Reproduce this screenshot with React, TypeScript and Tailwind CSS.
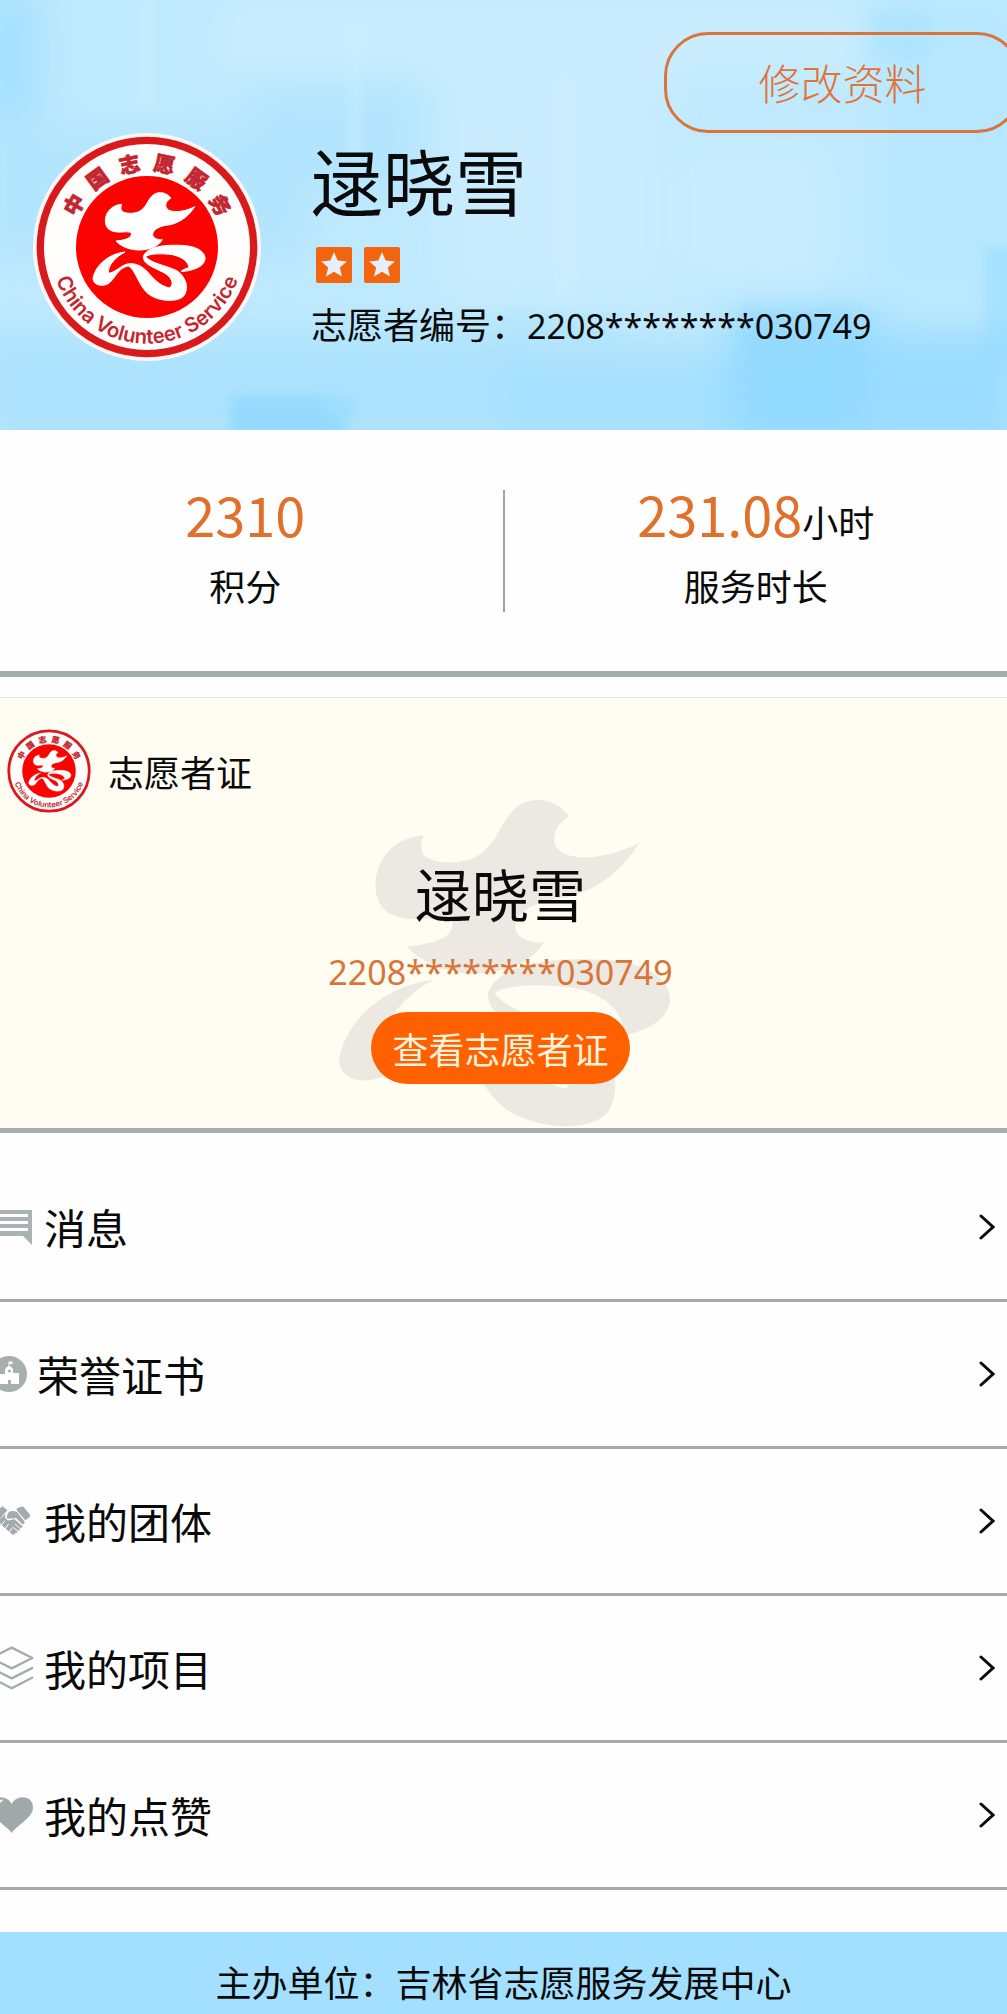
import type { ReactNode } from "react";

const SEAL_CHARS = ["中", "国", "志", "愿", "服", "务"];

// The "志" calligraphy mark, shared by the round seal and the card watermark
function ZhiMark() {
  return (
    <>
      <path d="M118 57C95 58 70 75 69 106C69 135 92 142 120 140C146 138 150 142 146 150C142 160 125 165 101 167C112 180 135 192 165 194C205 195 230 180 240 163C225 164 212 158 211 148C211 132 235 120 265 118C300 108 320 90 337 64C315 76 285 82 266 77C245 72 245 50 266 38C255 26 245 22 234 22C210 22 202 40 192 57C180 77 165 84 143 84C122 83 110 77 118 57Z" />
      <path d="M128 200C80 205 38 240 32 280C34 300 58 304 76 296C98 284 104 248 138 242C158 250 168 300 198 326C230 350 290 352 306 330C322 300 306 272 284 256C250 240 206 234 190 214C200 204 240 204 270 208C300 214 318 230 320 246C312 252 300 250 297 259C330 256 364 246 368 222C370 198 340 180 290 180C240 178 192 186 183 214C183 236 210 244 232 256C262 268 280 292 262 308C232 302 214 280 196 260C180 242 160 234 142 235C118 236 100 262 78 264C76 240 100 215 128 200Z" />
    </>
  );
}

function Seal({ id, className }: { id: string; className: string }) {
  return (
    <svg viewBox="0 0 684 684" className={className} role="img" aria-label="中国志愿服务">
      <circle cx="342" cy="342" r="342" fill="#fff6f4" />
      <circle cx="342" cy="342" r="320" fill="#fffefd" stroke="#d91a1c" strokeWidth="22" />
      <circle cx="342" cy="342" r="213" fill="#fb0300" />
      <g fill="#ffffff" stroke="#ffffff" strokeWidth="3" transform="translate(148 157)">
        <ZhiMark />
      </g>
      <g
        fill="#c4262f"
        stroke="#c4262f"
        strokeWidth="2"
        fontFamily="'Noto Sans CJK SC', sans-serif"
        fontWeight="900"
        fontSize="62"
        textAnchor="middle"
      >
        {SEAL_CHARS.map((char, i) => (
          <text key={char} x="342" y="112" transform={`rotate(${-60 + i * 24} 342 342)`}>
            {char}
          </text>
        ))}
      </g>
      <path id={id} d="M52 342A290 290 0 0 0 632 342" fill="none" />
      <text fill="#c4262f" fontFamily="Inter, sans-serif" fontWeight="600" fontSize="61" textAnchor="middle">
        <textPath href={`#${id}`} startOffset="50%">
          China Volunteer Service
        </textPath>
      </text>
    </svg>
  );
}

// Watercolour wash behind the profile
function HeaderWash() {
  return (
    <svg
      viewBox="0 0 1007 430"
      preserveAspectRatio="none"
      className="absolute inset-0 h-full w-full"
      aria-hidden="true"
    >
      <defs>
        <filter id="wash" x="-20%" y="-20%" width="140%" height="140%">
          <feGaussianBlur stdDeviation="20" />
        </filter>
        <filter id="washEdge" x="-20%" y="-20%" width="140%" height="140%">
          <feGaussianBlur stdDeviation="6" />
        </filter>
      </defs>
      <rect width="1007" height="430" fill="#bfe9fe" />
      <g filter="url(#wash)">
        <rect x="-20" y="-10" width="60" height="130" fill="#a4e0ff" />
        <rect x="220" y="0" width="640" height="75" fill="#c9edfe" />
        <rect x="440" y="60" width="230" height="240" fill="#c9ecfe" />
        <rect x="680" y="140" width="150" height="150" fill="#c8ecff" />
        <rect x="-20" y="130" width="330" height="130" fill="#b2e5fe" />
        <rect x="250" y="80" width="170" height="110" fill="#b4e5fe" />
        <rect x="880" y="0" width="140" height="290" fill="#b6e7ff" />
        <rect x="-20" y="330" width="540" height="120" fill="#ade3fe" />
        <rect x="500" y="350" width="520" height="100" fill="#a6e0fe" />
        <rect x="730" y="310" width="150" height="140" fill="#92daff" />
        <rect x="860" y="330" width="160" height="120" fill="#9adcff" />
      </g>
      <g filter="url(#washEdge)" opacity="0.5">
        <rect x="230" y="396" width="116" height="44" fill="#7dd0fb" />
        <rect x="322" y="398" width="34" height="18" fill="#8fd9fd" />
        <rect x="740" y="310" width="110" height="60" fill="#95dbff" />
        <rect x="985" y="248" width="40" height="120" fill="#93daff" />
        <rect x="500" y="312" width="120" height="36" fill="#afe3fd" />
        <rect x="140" y="0" width="14" height="110" fill="#cdeffe" />
        <rect x="350" y="20" width="10" height="160" fill="#cdeffe" />
        <rect x="560" y="80" width="12" height="220" fill="#d2f0fe" />
        <rect x="870" y="10" width="60" height="50" fill="#a9e2ff" />
      </g>
    </svg>
  );
}

function StarBadge() {
  return (
    <svg viewBox="0 0 36 36" className="h-9 w-9" aria-hidden="true">
      <rect width="36" height="36" rx="2" fill="#f4650f" />
      <path
        d="M18 5l3.6 8.6 9.2.8-7 6.1 2.2 9.1-8-4.9-8 4.9 2.2-9.1-7-6.1 9.2-.8z"
        fill="#e4f1f8"
      />
    </svg>
  );
}

function MessageIcon() {
  return (
    <svg viewBox="0 0 34 36" className="h-9 w-[34px]" aria-hidden="true">
      <path d="M0 1h32v35l-9-9H0z" fill="#aab2b2" />
      <path d="M0 6.500h28M0 13.500h28M0 20.500h28" stroke="#fff" strokeWidth="3" />
    </svg>
  );
}

function HonorIcon() {
  return (
    <svg viewBox="0 0 27 36" className="h-9 w-[27px]" aria-hidden="true">
      <circle cx="9" cy="18" r="18" fill="#a7afaf" />
      <path
        d="M-1 18h6v-4c0-2 2-3 3.500-4V5.500h4v2.500h-3v2c2 1 3.500 2 3.500 4v3h6v11H11v-4H8v4h-9z"
        fill="#fff"
      />
      <circle cx="9.500" cy="15" r="1.500" fill="#a7afaf" />
    </svg>
  );
}

function TeamIcon() {
  return (
    <svg viewBox="0 0 102 108" className="h-9 w-[34px]" aria-hidden="true">
      <path d="M-12 24L8 10L22 22L-4 52L-14 44Z" fill="#a3abae" />
      <path d="M49 20Q50 16 55 14L64 11Q69 10 73 14L90 35Q92 40 88 43L76 52Z" fill="#a3abae" />
      <path d="M26 28Q34 22 44 25L52 28L74 56Q74 66 66 63L48 45Q38 48 32 46Q24 50 20 44Q20 38 26 28Z" fill="#a3abae" />
      <path
        d="M20 30Q12 40 18 48Q24 54 34 50L44 49L68 70Q66 78 60 74Q62 84 54 82Q54 92 46 89Q44 98 36 94L2 64L-2 50Z"
        fill="#a3abae"
      />
      <g stroke="#fff" strokeWidth="3" fill="none" strokeLinecap="round">
        <path d="M0 72L14 54M12 82L25 64M24 92L36 76M46 64L60 76M38 72L53 84" />
      </g>
    </svg>
  );
}

function ProjectIcon() {
  return (
    <svg viewBox="0 0 102 132" className="h-11 w-[34px]" aria-hidden="true">
      <g fill="none" stroke="#a6abac" strokeWidth="7" strokeLinejoin="round">
        <path d="M-27 36L35 5L97 36L35 67Z" />
        <path d="M-27 66L35 97L99 65" />
        <path d="M-27 95L35 127L99 94" />
      </g>
    </svg>
  );
}

function LikeIcon() {
  return (
    <svg viewBox="0 0 102 108" className="h-9 w-[34px]" aria-hidden="true">
      <path
        d="M35 108C20 86-28 64-28 28C-28 10-14 1 2 1C18 1 30 10 35 22C40 10 52 1 68 1C86 1 99 13 99 32C99 62 50 84 35 108Z"
        fill="#a0a8aa"
      />
      <path d="M-4 24Q-2 12 6 10" fill="none" stroke="#fff" strokeWidth="5" strokeLinecap="round" />
    </svg>
  );
}

function Chevron() {
  return (
    <svg viewBox="0 0 16 26" className="h-[26px] w-4" aria-hidden="true">
      <path d="M2 2L14 13L2 24" fill="none" stroke="#0a0a0a" strokeWidth="3" strokeLinecap="round" />
    </svg>
  );
}

const MENU: { href: string; label: string; icon: ReactNode }[] = [
  { href: "#messages", label: "消息", icon: <MessageIcon /> },
  { href: "#honors", label: "荣誉证书", icon: <HonorIcon /> },
  { href: "#teams", label: "我的团体", icon: <TeamIcon /> },
  { href: "#projects", label: "我的项目", icon: <ProjectIcon /> },
  { href: "#likes", label: "我的点赞", icon: <LikeIcon /> },
];

export default function App() {
  return (
    <div className="overflow-hidden bg-[#fefefe] font-['Noto_Sans_CJK_SC',sans-serif] text-4xl text-[#0a0a0a]">
      {/* Profile */}
      <header className="relative overflow-hidden pt-8 pb-[69px]">
        <HeaderWash />
        <div className="relative">
          <button
            type="button"
            className="-mr-3.5 ml-auto block h-[101px] w-[357px] rounded-[44px] border-3 border-[#d9743a] text-[42px] font-light text-[#e0733a]"
          >
            修改资料
          </button>
          <div className="flex items-start gap-[50px] pl-[33px]">
            <Seal id="sealTextLarge" className="h-[228px] w-[228px] shrink-0" />
            <div>
              <h1 className="text-[72px] leading-[92px]">逯晓雪</h1>
              <div className="mt-[22px] flex gap-3 pl-[5px]" role="img" aria-label="二星志愿者">
                <StarBadge />
                <StarBadge />
              </div>
              <p className="mt-5 leading-[40px] whitespace-nowrap">
                志愿者编号：<span className="font-['Noto_Sans',sans-serif] text-[34px]">2208********030749</span>
              </p>
            </div>
          </div>
        </div>
      </header>

      {/* Points and hours */}
      <section className="grid grid-cols-[1fr_2px_1fr] border-b-6 border-[#a5adaf] pt-[50px] pb-[61px] text-center">
        <div className="pr-3">
          <p className="h-[68px] text-[54px] leading-[68px] text-[#e0702a]">2310</p>
          <p className="mt-3 leading-[50px]">积分</p>
        </div>
        <div className="mt-2.5 -mb-0.5 h-[122px] bg-[#a3a3a3]" />
        <div>
          <p className="h-[68px] text-[54px] leading-[68px] text-[#e0702a]">
            231.08<span className="text-4xl text-[#0a0a0a]">小时</span>
          </p>
          <p className="mt-3 leading-[50px]">服务时长</p>
        </div>
      </section>

      {/* Volunteer card */}
      <section className="relative mt-5 border-t border-b-5 border-t-[#e6e6e2] border-b-[#a9adab] bg-[#fffdf1] pt-[30px] pb-11">
        <svg
          viewBox="29 22 341 325"
          preserveAspectRatio="none"
          className="absolute inset-x-0 bottom-0 mx-auto h-[328px] w-[336px]"
          fill="#ece9e2"
          aria-hidden="true"
        >
          <ZhiMark />
        </svg>
        <div className="relative">
          <div className="flex items-center gap-4 pl-1.5">
            <Seal id="sealTextSmall" className="h-[86px] w-[86px]" />
            <h2>志愿者证</h2>
          </div>
          <div className="flex flex-col items-center pr-1.5">
            <p className="mt-[42px] text-[57px] leading-[72px]">逯晓雪</p>
            <p className="mt-5 font-['Noto_Sans',sans-serif] text-[34px] leading-[48px] text-[#d9743a]">
              2208********030749
            </p>
            <button type="button" className="mt-4 h-[72px] rounded-full bg-[#ff6100] px-[21px] text-[#fff3dc]">
              查看志愿者证
            </button>
          </div>
        </div>
      </section>

      {/* Menu */}
      <nav className="mt-[22px]">
        <ul>
          {MENU.map((item) => (
            <li key={item.href} className="border-b-3 border-[#a9a9a9]">
              <a href={item.href} className="flex h-36 items-center gap-2.5 pr-3 text-[42px]">
                {item.icon}
                <span className="flex-1">{item.label}</span>
                <Chevron />
              </a>
            </li>
          ))}
        </ul>
      </nav>

      <footer className="mt-[42px] bg-[#a3dfff] pt-[22px] pb-1.5 text-center leading-[54px]">
        主办单位：吉林省志愿服务发展中心
      </footer>
    </div>
  );
}
